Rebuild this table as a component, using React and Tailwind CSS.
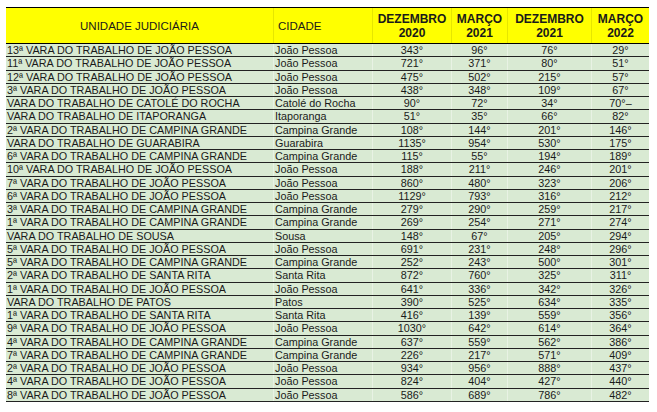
const rows = [
  ["13ª VARA DO TRABALHO DE JOÃO PESSOA", "João Pessoa", "343°", "96°", "76°", "29°"],
  ["11ª VARA DO TRABALHO DE JOÃO PESSOA", "João Pessoa", "721°", "371°", "80°", "51°"],
  ["12ª VARA DO TRABALHO DE JOÃO PESSOA", "João Pessoa", "475°", "502°", "215°", "57°"],
  ["3ª VARA DO TRABALHO DE JOÃO PESSOA", "João Pessoa", "438°", "348°", "109°", "67°"],
  ["VARA DO TRABALHO DE CATOLÉ DO ROCHA", "Catolé do Rocha", "90°", "72°", "34°", "70°–"],
  ["VARA DO TRABALHO DE ITAPORANGA", "Itaporanga", "51°", "35°", "66°", "82°"],
  ["2ª VARA DO TRABALHO DE CAMPINA GRANDE", "Campina Grande", "108°", "144°", "201°", "146°"],
  ["VARA DO TRABALHO DE GUARABIRA", "Guarabira", "1135°", "954°", "530°", "175°"],
  ["6ª VARA DO TRABALHO DE CAMPINA GRANDE", "Campina Grande", "115°", "55°", "194°", "189°"],
  ["10ª VARA DO TRABALHO DE JOÃO PESSOA", "João Pessoa", "188°", "211°", "246°", "201°"],
  ["7ª VARA DO TRABALHO DE JOÃO PESSOA", "João Pessoa", "860°", "480°", "323°", "206°"],
  ["6ª VARA DO TRABALHO DE JOÃO PESSOA", "João Pessoa", "1129°", "793°", "316°", "212°"],
  ["3ª VARA DO TRABALHO DE CAMPINA GRANDE", "Campina Grande", "279°", "290°", "259°", "217°"],
  ["1ª VARA DO TRABALHO DE CAMPINA GRANDE", "Campina Grande", "269°", "254°", "271°", "274°"],
  ["VARA DO TRABALHO DE SOUSA", "Sousa", "148°", "67°", "205°", "294°"],
  ["5ª VARA DO TRABALHO DE JOÃO PESSOA", "João Pessoa", "691°", "231°", "248°", "296°"],
  ["5ª VARA DO TRABALHO DE CAMPINA GRANDE", "Campina Grande", "252°", "243°", "500°", "301°"],
  ["2ª VARA DO TRABALHO DE SANTA RITA", "Santa Rita", "872°", "760°", "325°", "311°"],
  ["1ª VARA DO TRABALHO DE JOÃO PESSOA", "João Pessoa", "641°", "336°", "342°", "326°"],
  ["VARA DO TRABALHO DE PATOS", "Patos", "390°", "525°", "634°", "335°"],
  ["1ª VARA DO TRABALHO DE SANTA RITA", "Santa Rita", "416°", "139°", "559°", "356°"],
  ["9ª VARA DO TRABALHO DE JOÃO PESSOA", "João Pessoa", "1030°", "642°", "614°", "364°"],
  ["4ª VARA DO TRABALHO DE CAMPINA GRANDE", "Campina Grande", "637°", "559°", "562°", "386°"],
  ["7ª VARA DO TRABALHO DE CAMPINA GRANDE", "Campina Grande", "226°", "217°", "571°", "409°"],
  ["2ª VARA DO TRABALHO DE JOÃO PESSOA", "João Pessoa", "934°", "956°", "888°", "437°"],
  ["4ª VARA DO TRABALHO DE JOÃO PESSOA", "João Pessoa", "824°", "404°", "427°", "440°"],
  ["8ª VARA DO TRABALHO DE JOÃO PESSOA", "João Pessoa", "586°", "689°", "786°", "482°"],
]

const cols = "grid grid-cols-[268px_99px_79px_56px_84px_57px]"

export default function App() {
  return (
    <div className="w-[657px] h-[412px] bg-white pt-[7px] pl-[6px] font-['Liberation_Sans',Arial,sans-serif] text-[#1a1a1a]">
      <div className="w-[643px]">
        {/* Header */}
        <div className={`${cols} h-[37px] bg-[#ffff00] border-t border-b border-black text-[12px] leading-[14px]`}>
          <div className="flex items-center justify-center text-[11.5px] border-r border-[#e6e600]">UNIDADE JUDICIÁRIA</div>
          <div className="flex items-center pl-[4px] text-[11.5px] border-r border-[#e6e600]">CIDADE</div>
          <div className="flex flex-col items-center justify-center font-bold border-r border-[#e6e600]">
            <span>DEZEMBRO</span>
            <span>2020</span>
          </div>
          <div className="flex flex-col items-center justify-center font-bold border-r border-[#e6e600]">
            <span>MARÇO</span>
            <span>2021</span>
          </div>
          <div className="flex flex-col items-center justify-center font-bold border-r border-[#e6e600]">
            <span>DEZEMBRO</span>
            <span>2021</span>
          </div>
          <div className="flex flex-col items-center justify-center font-bold">
            <span>MARÇO</span>
            <span>2022</span>
          </div>
        </div>

        {/* Rows */}
        {rows.map((r, i) => (
          <div
            key={i}
            className={`${cols} h-[13.25px] bg-[#d9ead3] border-b border-[#222] text-[10.8px] leading-[12px]`}
          >
            <div className="pl-[1px] whitespace-nowrap overflow-hidden border-r border-[#e8f2e4]">{r[0]}</div>
            <div className="pl-[1px] whitespace-nowrap overflow-hidden border-r border-[#e8f2e4]">{r[1]}</div>
            <div className="text-center border-r border-[#e8f2e4]">{r[2]}</div>
            <div className="text-center border-r border-[#e8f2e4]">{r[3]}</div>
            <div className="text-center border-r border-[#e8f2e4]">{r[4]}</div>
            <div className="text-center">{r[5]}</div>
          </div>
        ))}
      </div>
    </div>
  )
}
